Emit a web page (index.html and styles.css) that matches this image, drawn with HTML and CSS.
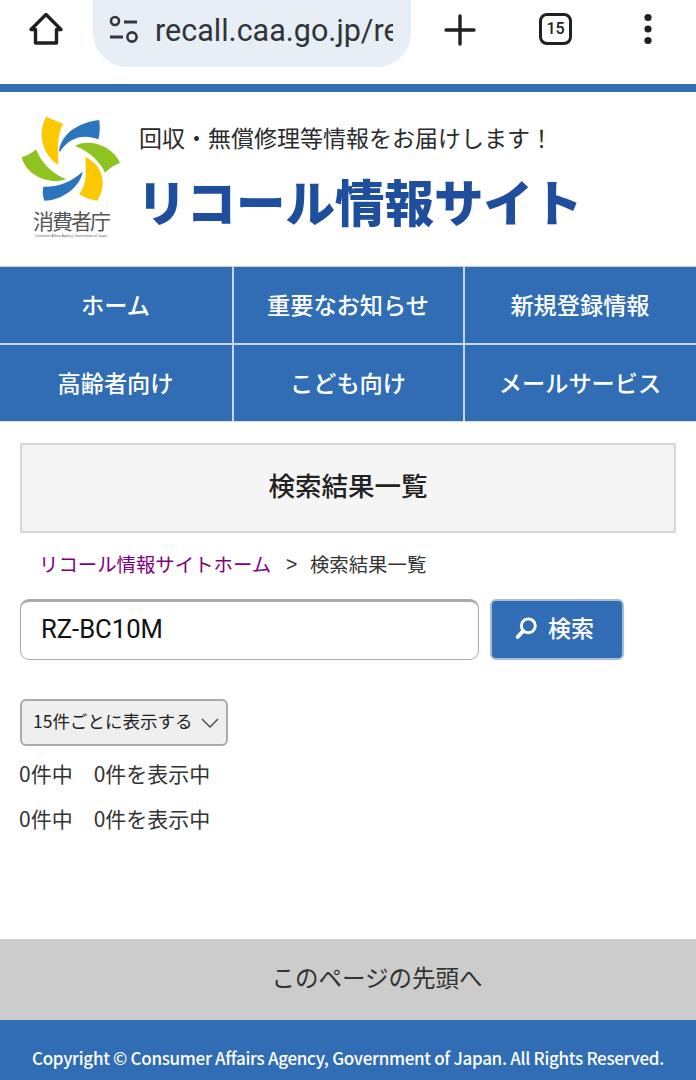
FILE: index.html
```html
<!DOCTYPE html>
<html lang="ja">
<head>
  <meta charset="UTF-8">
  <meta name="viewport" content="width=device-width, initial-scale=1.0">
  <title>検索結果一覧 | リコール情報サイト</title>
  <link rel="stylesheet" href="styles.css">
</head>
<body>
  <div class="browser-bar">
    <svg class="icon-home" width="36" height="36" viewBox="0 0 36 36">
      <path d="M18 3.5 L33 18.5 H28.5 V32 H7.5 V18.5 H3 Z" fill="none" stroke="#1f2023" stroke-width="3.4" stroke-linejoin="round"/>
    </svg>
    <div class="url-pill">
      <svg width="32" height="32" viewBox="0 0 32 32">
        <circle cx="7" cy="7" r="4" fill="none" stroke="#33373d" stroke-width="2.6"/>
        <path d="M16 8 H29 M2 23 H15" stroke="#33373d" stroke-width="2.8"/>
        <circle cx="24" cy="23" r="4.6" fill="none" stroke="#33373d" stroke-width="2.6"/>
      </svg>
      <span class="url-text">recall.caa.go.jp/re</span>
    </div>
    <svg class="icon-plus" width="32" height="32" viewBox="0 0 32 32">
      <path d="M16 2 V30 M2 16 H30" stroke="#1f2023" stroke-width="3.4" stroke-linecap="round"/>
    </svg>
    <div class="tab-count">15</div>
    <svg class="icon-more" width="10" height="32" viewBox="0 0 10 32">
      <circle cx="5" cy="4.5" r="3.6" fill="#1f2023"/>
      <circle cx="5" cy="16" r="3.6" fill="#1f2023"/>
      <circle cx="5" cy="27.5" r="3.6" fill="#1f2023"/>
    </svg>
  </div>

  <header class="site-header">
    <div class="logo">
      <svg class="logo-mark" width="102" height="90" viewBox="30 15 306 270">
        <path d="M108 20 L160 42 C140 70 145 115 145 165 C100 135 80 75 108 20 Z" fill="#fcc800"/>
        <path d="M147 122 C155 70 205 38 268 30 C270 50 270 70 265 88 C225 72 180 78 150 125 Z" fill="#2a75bb"/>
        <path d="M195 108 C235 85 305 105 330 158 C312 165 298 175 285 188 C270 155 240 125 195 108 Z" fill="#8fc31f"/>
        <path d="M226 142 C280 165 292 225 262 272 C243 270 225 263 207 252 C232 225 228 185 226 142 Z" fill="#fcc800"/>
        <path d="M218 185 C210 235 150 272 103 272 C98 258 97 245 100 230 C145 232 185 215 218 185 Z" fill="#2a75bb"/>
        <path d="M35 142 C50 138 65 130 78 118 C95 160 125 190 168 208 C120 225 50 200 35 142 Z" fill="#8fc31f"/>
      </svg>
      <span class="logo-name">消費者庁</span>
      <span class="logo-en">Consumer Affairs Agency, Government of Japan</span>
    </div>
    <div class="header-text">
      <p class="tagline">回収・無償修理等情報をお届けします！</p>
      <p class="site-name">リコール情報サイト</p>
    </div>
  </header>

  <nav class="main-nav">
    <a href="#">ホーム</a>
    <a href="#">重要なお知らせ</a>
    <a href="#">新規登録情報</a>
    <a href="#">高齢者向け</a>
    <a href="#">こども向け</a>
    <a href="#">メールサービス</a>
  </nav>

  <main class="content">
    <h1 class="page-title">検索結果一覧</h1>

    <div class="breadcrumb">
      <a href="#">リコール情報サイトホーム</a>
      <span class="sep">&gt;</span>
      <span>検索結果一覧</span>
    </div>

    <form class="search-form">
      <div class="search-input">RZ-BC10M</div>
      <button class="search-btn" type="button">
        <svg width="27" height="27" viewBox="0 0 24 24">
          <circle cx="14.5" cy="10.5" r="6.2" fill="none" stroke="#fff" stroke-width="2.6"/>
          <path d="M10 15 L5 20.5" stroke="#fff" stroke-width="3.4" stroke-linecap="round"/>
        </svg>
        検索
      </button>
    </form>

    <div class="per-page">
      15件ごとに表示する
      <svg width="18" height="10" viewBox="0 0 18 10">
        <path d="M1 1 L9 9 L17 1" fill="none" stroke="#444" stroke-width="1.3"/>
      </svg>
    </div>

    <p class="count">0件中　0件を表示中</p>
    <p class="count">0件中　0件を表示中</p>
  </main>

  <a class="to-top" href="#">このページの先頭へ</a>
  <footer class="site-footer">Copyright © Consumer Affairs Agency, Government of Japan. All Rights Reserved.</footer>
</body>
</html>
```

FILE: styles.css
```css
body {
  margin: 0;
  font-family: "Noto Sans CJK JP", "Noto Sans", sans-serif;
  color: #333;
  background-color: #fff;
  height: 1080px;
  display: flex;
  flex-direction: column;
  overflow: hidden;
}

a {
  text-decoration: none;
}

p {
  margin: 0;
}

.browser-bar {
  height: 84px;
  display: flex;
  align-items: flex-start;
  flex-shrink: 0;
}

.icon-home {
  margin: 11px 0 0 28px;
}

.url-pill {
  width: 318px;
  height: 67px;
  margin-left: 29px;
  padding: 0 0 7px 15px;
  box-sizing: border-box;
  background-color: #e8eef6;
  border-radius: 0 0 34px 34px;
  display: flex;
  align-items: center;
  gap: 15px;
  overflow: hidden;
}

.url-text {
  font-family: Roboto, sans-serif;
  font-size: 30.5px;
  color: #30343a;
  width: 238px;
  white-space: nowrap;
  overflow: hidden;
}

.icon-plus {
  margin: 14px 0 0 33px;
}

.tab-count {
  width: 27px;
  height: 26px;
  margin: 13px 0 0 63px;
  border: 3.5px solid #1f2023;
  border-radius: 8px;
  font-family: Roboto, sans-serif;
  font-size: 16px;
  font-weight: 500;
  color: #1f2023;
  text-align: center;
  line-height: 26px;
}

.icon-more {
  margin: 13px 0 0 71px;
}

.site-header {
  border-top: 8px solid #306db5;
  height: 174px;
  display: flex;
  flex-shrink: 0;
}

.logo {
  width: 102px;
  margin: 23px 0 0 20px;
  display: flex;
  flex-direction: column;
  align-items: center;
}

.logo-mark {
  display: block;
}

.logo-name {
  font-size: 21px;
  line-height: 22px;
  letter-spacing: -2px;
  color: #555;
  margin-top: 4px;
  white-space: nowrap;
}

.logo-en {
  margin-top: 3px;
  font-family: "Liberation Sans", sans-serif;
  font-size: 3.4px;
  line-height: 4px;
  color: #666;
  white-space: nowrap;
}

.header-text {
  margin: 28px 0 0 17px;
}

.tagline {
  font-size: 23px;
  line-height: 34px;
  color: #2b2b2b;
  white-space: nowrap;
}

.site-name {
  margin: 12px 0 0 -2px;
  font-size: 49.5px;
  font-weight: 900;
  line-height: 70px;
  color: #1f4e9c;
  white-space: nowrap;
}

.main-nav {
  display: grid;
  grid-template-columns: 234px 231px 1fr;
  grid-template-rows: 78px 76px;
  border-top: 1px solid #ccc;
  border-bottom: 1px solid #ddd;
  flex-shrink: 0;
}

.main-nav a {
  display: flex;
  align-items: center;
  justify-content: center;
  background-color: #306db5;
  color: #fff;
  font-size: 23.2px;
  font-weight: 500;
  padding: 0 1px 3px 0;
  border-right: 2px solid #c8d5e7;
  border-bottom: 2px solid #c8d5e7;
  box-sizing: border-box;
}

.main-nav a:nth-child(3n) {
  border-right: none;
}

.main-nav a:nth-child(n+4) {
  border-bottom: none;
}

.content {
  flex: 1;
  padding: 21px 20px 0;
}

.page-title {
  margin: 0;
  height: 90px;
  box-sizing: border-box;
  padding-bottom: 8px;
  border: 2px solid #d6d6d6;
  background-color: #f5f5f5;
  font-size: 26.5px;
  font-weight: 500;
  color: #222;
  display: flex;
  align-items: center;
  justify-content: center;
}

.breadcrumb {
  margin: 16px 0 0 19px;
  font-size: 19.4px;
  line-height: 30px;
  color: #333;
  display: flex;
}

.breadcrumb a {
  color: #800080;
}

.sep {
  margin: 0 14px 0 15px;
  font-family: "Liberation Sans", sans-serif;
}

.sep + span {
  margin-left: -1.5px;
}

.search-form {
  margin-top: 20px;
  display: flex;
  gap: 11px;
}

.search-input {
  width: 459px;
  height: 61px;
  box-sizing: border-box;
  border: 1px solid #aaa;
  border-top: 3px solid #aaa;
  border-radius: 9px;
  padding-left: 20px;
  font-family: Roboto, sans-serif;
  font-size: 25.6px;
  line-height: 55px;
  color: #111;
}

.search-btn {
  width: 134px;
  height: 61px;
  padding: 0 0 5px 20px;
  background-color: #306db5;
  color: #fff;
  border: 2px solid #a9bdd6;
  border-radius: 6px;
  font-family: inherit;
  font-size: 23px;
  font-weight: 500;
  display: flex;
  align-items: center;
  gap: 9px;
}

.per-page {
  width: 208px;
  height: 47px;
  box-sizing: border-box;
  margin-top: 39px;
  padding: 0 7px 5px 11px;
  background-color: #efefef;
  border: 2px solid #aaa;
  border-radius: 6px;
  font-size: 17.5px;
  color: #222;
  display: flex;
  align-items: center;
  justify-content: space-between;
}

.per-page svg {
  margin-top: 5px;
}

.count {
  font-size: 21px;
  line-height: 30px;
  color: #333;
  margin-top: 15px;
  margin-left: -1px;
}

.per-page + .count {
  margin-top: 12px;
}

.to-top {
  height: 81px;
  box-sizing: border-box;
  padding: 0 0 6px 58px;
  background-color: #ccc;
  color: #333;
  font-size: 23.5px;
  display: flex;
  align-items: center;
  justify-content: center;
  flex-shrink: 0;
}

.site-footer {
  height: 60px;
  box-sizing: border-box;
  padding-top: 14px;
  background-color: #306db5;
  color: #fff;
  font-size: 17px;
  letter-spacing: -0.3px;
  font-weight: 500;
  display: flex;
  align-items: center;
  justify-content: center;
  white-space: nowrap;
  flex-shrink: 0;
}
```
